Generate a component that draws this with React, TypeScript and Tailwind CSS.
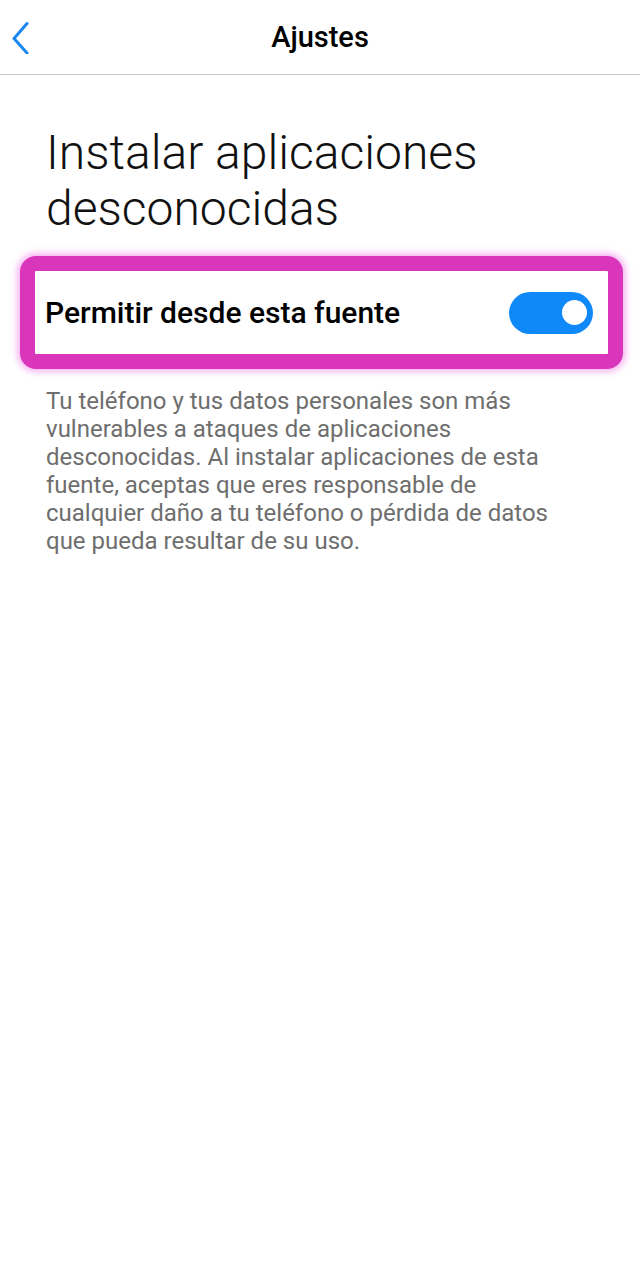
export default function App() {
  return (
    <div className="w-[640px] h-[1280px] bg-white" style={{ fontFamily: "Roboto, 'Noto Sans', sans-serif" }}>
      <div className="relative h-[75px] border-b border-[#c8c8c8] flex items-center justify-center">
        <svg className="absolute left-[10px] top-[20px]" width="22" height="34" viewBox="0 0 22 34">
          <path d="M17 3.5 L4 18.5 L17 33" fill="none" stroke="#1a88f0" strokeWidth="3" strokeLinecap="round" strokeLinejoin="round" />
        </svg>
        <div className="text-[29px] font-medium text-black mt-[1px]">Ajustes</div>
      </div>
      <h1 className="pl-[46px] pr-6 pt-[50px] text-[48px] leading-[56px] font-light text-[#111]">
        Instalar aplicaciones desconocidas
      </h1>
      <div className="ml-[20px] mt-[19px] w-[603px] h-[113px] rounded-[16px] border-[15px] border-[#da36bb] bg-white shadow-[0_0_6px_3px_rgba(240,120,230,0.55)]">
        <div className="h-full flex items-center justify-between pl-[10px] pr-[15px] rounded-[3px]">
          <span className="text-[30px] font-medium text-black">Permitir desde esta fuente</span>
          <div className="w-[84px] h-[42px] rounded-full bg-[#0f88f8] flex items-center justify-end pr-[6px]">
            <div className="w-[25px] h-[25px] rounded-full bg-white" />
          </div>
        </div>
      </div>
      <p className="pl-[46px] pr-[60px] mt-[18px] text-[24px] leading-[28px] text-[#6e6e6e]">
        Tu teléfono y tus datos personales son más vulnerables a ataques de aplicaciones desconocidas. Al instalar aplicaciones de esta fuente, aceptas que eres responsable de cualquier daño a tu teléfono o pérdida de datos que pueda resultar de su uso.
      </p>
    </div>
  );
}
